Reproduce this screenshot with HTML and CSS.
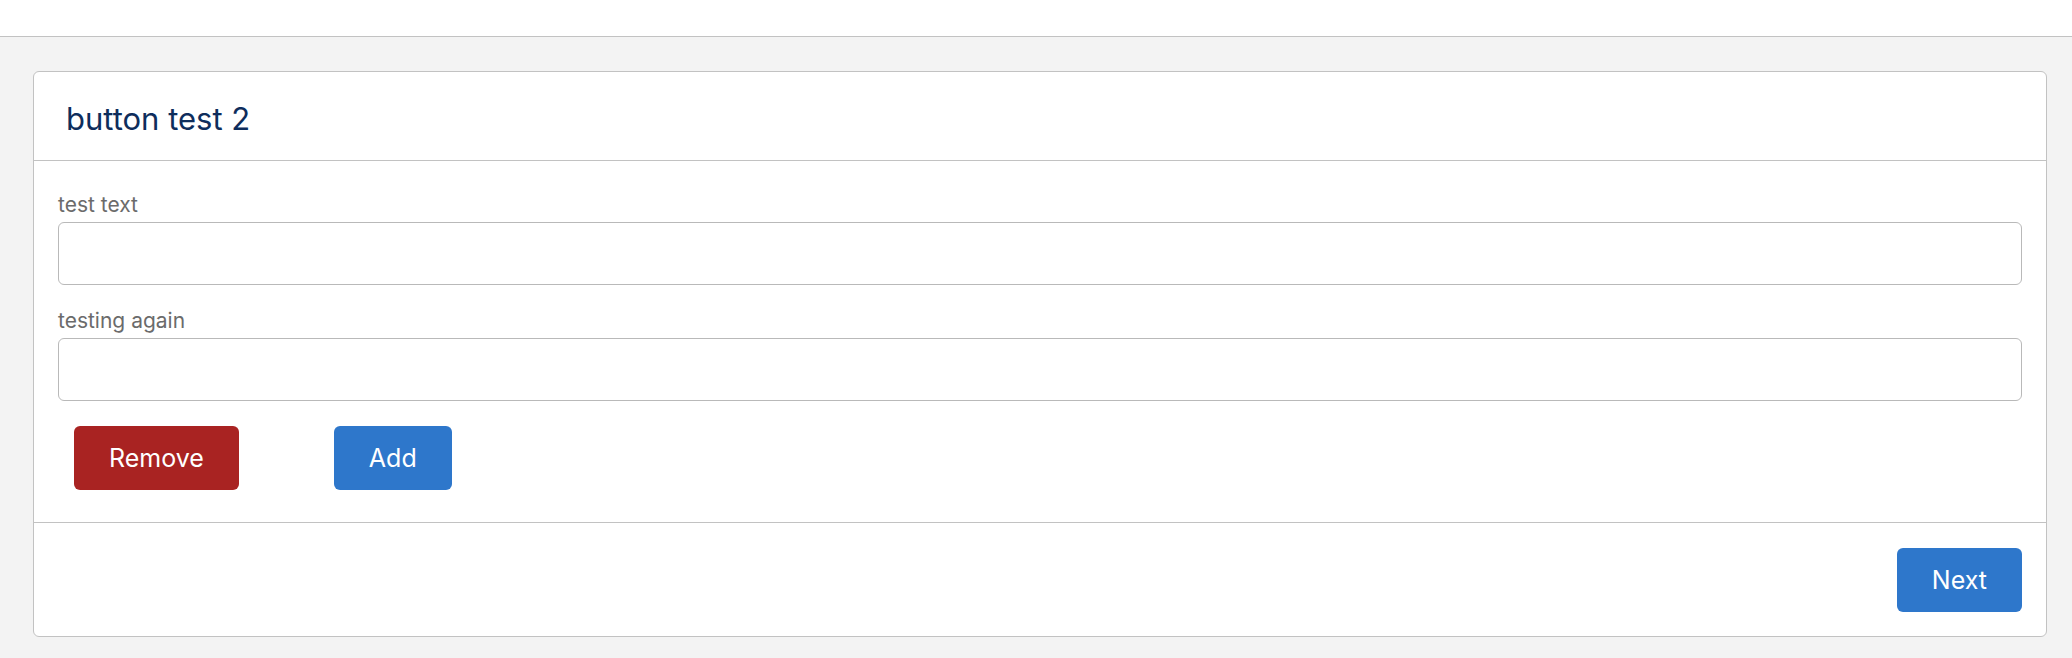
FILE: index.html
```html
<!DOCTYPE html>
<html lang="en">
<head>
<meta charset="utf-8">
<title>button test 2</title>
<link rel="stylesheet" href="styles.css">
</head>
<body>
<header class="topbar"></header>
<main class="page">
  <section class="card">
    <div class="card-header">
      <h2 class="card-title">button test 2</h2>
    </div>
    <div class="card-body">
      <div class="field">
        <label class="field-label" for="f1">test text</label>
        <input class="field-input" id="f1" type="text">
      </div>
      <div class="field">
        <label class="field-label" for="f2">testing again</label>
        <input class="field-input" id="f2" type="text">
      </div>
      <div class="actions">
        <button class="btn btn-danger" type="button">Remove</button>
        <button class="btn btn-primary" type="button">Add</button>
      </div>
    </div>
    <div class="card-footer">
      <button class="btn btn-primary" type="button">Next</button>
    </div>
  </section>
</main>
</body>
</html>
```
FILE: styles.css
```css
* { box-sizing: border-box; }
html, body { margin: 0; padding: 0; }
body {
  background: #f3f3f3;
  font-family: Inter, "Noto Sans", "Liberation Sans", sans-serif;
  height: 658px;
  overflow: hidden;
}
.topbar {
  height: 37px;
  background: #ffffff;
  border-bottom: 1px solid #c2c2c2;
}
.page {
  padding: 34px 25px 0 33px;
}
.card {
  background: #ffffff;
  border: 1px solid #c2c2c2;
  border-radius: 6px;
}
.card-header {
  padding: 28px 32px 22px;
  border-bottom: 1px solid #c2c2c2;
}
.card-title {
  margin: 0;
  font-size: 31px;
  line-height: 38px;
  font-weight: 400;
  color: #0e2d5c;
}
.card-body {
  padding: 30px 24px 32px;
  border-bottom: 1px solid #c2c2c2;
  display: flex;
  flex-direction: column;
  gap: 22px;
}
.field {
  display: flex;
  flex-direction: column;
  gap: 3px;
}
.field-label {
  font-size: 21px;
  line-height: 28px;
  color: #6b6b6b;
}
.field-input {
  height: 63px;
  border: 1px solid #b9b9b9;
  border-radius: 6px;
  background: #ffffff;
  font: inherit;
  padding: 0 14px;
  outline: none;
}
.actions {
  display: flex;
  gap: 95px;
  padding-left: 16px;
  margin-top: 3px;
}
.btn {
  height: 64px;
  padding: 0 35px;
  border: none;
  border-radius: 6px;
  font-family: Inter, "Noto Sans", "Liberation Sans", sans-serif;
  font-size: 25px;
  font-weight: 400;
  color: #ffffff;
  cursor: pointer;
}
.btn-danger { background: #a92322; }
.btn-primary { background: #2e77cb; }
.card-footer {
  padding: 25px 24px 24px;
  display: flex;
  justify-content: flex-end;
}
```
